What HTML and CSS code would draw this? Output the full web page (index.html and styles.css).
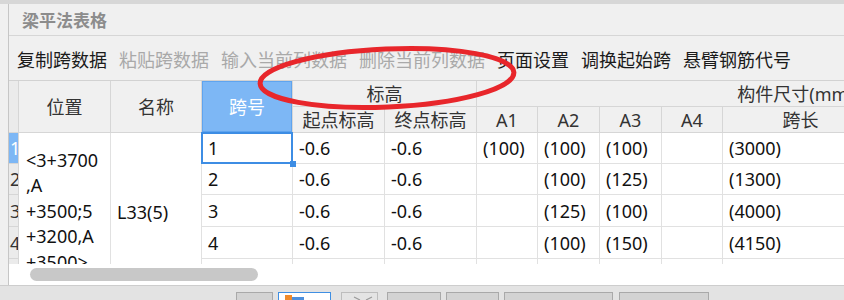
FILE: index.html
```html
<!DOCTYPE html>
<html lang="zh-CN">
<head>
<meta charset="utf-8">
<title>梁平法表格</title>
<link rel="stylesheet" href="styles.css">
</head>
<body>
<div class="topbar"></div>
<div class="frame">
  <div class="title">梁平法表格</div>
  <div class="toolbar">
    <span class="tb">复制跨数据</span>
    <span class="tb off">粘贴跨数据</span>
    <span class="tb off">输入当前列数据</span>
    <span class="tb off">删除当前列数据</span>
    <span class="tb">页面设置</span>
    <span class="tb">调换起始跨</span>
    <span class="tb">悬臂钢筋代号</span>
  </div>
  <div class="gridbox">
    <div class="viewport">
      <table class="grid">
        <colgroup>
          <col class="c-rh"><col class="c-pos"><col class="c-name"><col class="c-span">
          <col class="c-el"><col class="c-el"><col class="c-a1"><col class="c-a2">
          <col class="c-a2"><col class="c-a1"><col class="c-len"><col class="c-extra">
        </colgroup>
        <thead>
          <tr class="hr">
            <th class="rh" rowspan="2"></th>
            <th rowspan="2">位置</th>
            <th rowspan="2">名称</th>
            <th rowspan="2" class="hsel">跨号</th>
            <th colspan="2">标高</th>
            <th colspan="6">构件尺寸(mm)</th>
          </tr>
          <tr class="hr">
            <th>起点标高</th>
            <th>终点标高</th>
            <th>A1</th>
            <th>A2</th>
            <th>A3</th>
            <th>A4</th>
            <th>跨长</th>
            <th></th>
          </tr>
        </thead>
        <tbody>
          <tr class="r31">
            <td class="rh rsel">1</td>
            <td class="pos" rowspan="5">&lt;3+3700<br>,A<br>+3500;5<br>+3200,A<br>+3500&gt;</td>
            <td rowspan="5">L33(5)</td>
            <td class="cur">1</td>
            <td>-0.6</td><td>-0.6</td>
            <td>(100)</td><td>(100)</td><td>(100)</td><td></td>
            <td>(3000)</td><td></td>
          </tr>
          <tr class="r31">
            <td class="rh">2</td>
            <td>2</td>
            <td>-0.6</td><td>-0.6</td>
            <td></td><td>(100)</td><td>(125)</td><td></td>
            <td>(1300)</td><td></td>
          </tr>
          <tr class="r32">
            <td class="rh">3</td>
            <td>3</td>
            <td>-0.6</td><td>-0.6</td>
            <td></td><td>(125)</td><td>(100)</td><td></td>
            <td>(4000)</td><td></td>
          </tr>
          <tr class="r32">
            <td class="rh">4</td>
            <td>4</td>
            <td>-0.6</td><td>-0.6</td>
            <td></td><td>(100)</td><td>(150)</td><td></td>
            <td>(4150)</td><td></td>
          </tr>
          <tr class="r32">
            <td class="rh">5</td>
            <td>5</td>
            <td>-0.6</td><td>-0.6</td>
            <td></td><td>(100)</td><td>(100)</td><td></td>
            <td>(3000)</td><td></td>
          </tr>
        </tbody>
      </table>
    </div>
    <div class="hbar"><div class="thumb"></div></div>
  </div>
</div>
<div class="bottom">
  <div class="btn b1"></div>
  <div class="btn b2 on">
    <svg class="bicon" width="26" height="8" viewBox="0 0 26 8"><rect x="0" y="1" width="7" height="7" fill="#f08a2a"/><rect x="7" y="3" width="12" height="4" fill="#4d8fdc"/></svg>
  </div>
  <div class="btn b3 light">
    <svg class="bicon" width="30" height="8" viewBox="0 0 30 8"><polyline points="6,3 12,6" stroke="#9a9a9a" stroke-width="1.2" fill="none"/><polyline points="24,3 18,6" stroke="#9a9a9a" stroke-width="1.2" fill="none"/></svg>
  </div>
  <div class="btn b4"></div>
  <div class="btn b5"></div>
  <div class="btn b6"></div>
  <div class="btn b7"></div>
</div>
<svg class="mark" width="844" height="300" viewBox="0 0 844 300">
  <ellipse cx="387" cy="78" rx="127" ry="29" transform="rotate(-2.5 387 78)" fill="none" stroke="#e8262b" stroke-width="5"/>
</svg>
</body>
</html>
```
FILE: styles.css
```css
html, body {
  margin: 0;
  padding: 0;
}
body {
  width: 844px;
  height: 300px;
  overflow: hidden;
  position: relative;
  background: #f0f0f0;
  font-family: "Noto Sans", "Noto Sans CJK SC", sans-serif;
  font-size: 18px;
  color: #111;
}
.topbar {
  height: 4px;
  background: #d7d7d7;
}
.frame {
  margin-left: 8px;
  border-left: 1px solid #c6c6c6;
  height: 281px;
  display: flex;
  flex-direction: column;
}
.title {
  height: 31px;
  border-bottom: 1px solid #d6d6d6;
  padding-left: 13px;
  line-height: 31px;
  color: #8c8c8c;
  font-weight: bold;
  font-size: 17px;
  font-family: "Noto Sans CJK SC", sans-serif;
}
.toolbar {
  height: 44px;
  display: flex;
  align-items: center;
  gap: 12px;
  padding-left: 8px;
  font-family: "Noto Sans CJK SC", sans-serif;
  white-space: nowrap;
  overflow: hidden;
}
.tb {
  color: #1b1b1b;
  line-height: 24px;
  padding-top: 1px;
}
.tb.off {
  color: #a9a9a9;
}
.gridbox {
  background: #fff;
  height: 205px;
  display: flex;
  flex-direction: column;
}
.viewport {
  height: 184px;
  overflow: hidden;
}
.grid {
  border-collapse: separate;
  border-spacing: 0;
  table-layout: fixed;
  width: 1106px;
  border-top: 1px solid #d2d2d2;
}
.c-rh { width: 10px; }
.c-pos { width: 92px; }
.c-name { width: 91px; }
.c-span { width: 91px; }
.c-el { width: 92px; }
.c-a1 { width: 61px; }
.c-a2 { width: 62px; }
.c-len { width: 156px; }
.c-extra { width: 236px; }
.grid th, .grid td {
  padding: 0 0 0 6px;
  border-right: 1px solid #e1e1e1;
  border-bottom: 1px solid #e1e1e1;
  white-space: nowrap;
  overflow: hidden;
  text-align: left;
  vertical-align: middle;
  line-height: 24px;
}
.grid th {
  background: #f0f0f0;
  font-weight: normal;
  color: #333;
  text-align: center;
  padding: 0;
  border-right-color: #d6d6d6;
  border-bottom-color: #d6d6d6;
}
.hr { height: 26px; }
.r31 { height: 31px; }
.r32 { height: 32px; }
.grid .rh {
  background: #ebebeb;
  padding: 0 0 0 1px;
  color: #333;
  border-right-color: #d6d6d6;
  border-bottom-color: #d6d6d6;
  text-overflow: clip;
}
.grid th.hsel {
  background: #7db7f5;
  color: #fff;
  box-shadow: inset 0 0 0 1px #5fa4ef;
}
.grid td.rsel {
  background: #7db7f5;
  color: #fff;
}
.grid td.pos {
  white-space: normal;
  line-height: 25.5px;
  padding-left: 7px;
}
.grid td.cur {
  position: relative;
  overflow: visible;
}
.grid td.cur::after {
  content: "";
  position: absolute;
  left: -1px;
  top: -1px;
  right: -1px;
  bottom: -1px;
  border: 2px solid #3d8de4;
}
.grid td.cur::before {
  content: "";
  position: absolute;
  right: -4px;
  bottom: -4px;
  width: 6px;
  height: 6px;
  background: #3d8de4;
  z-index: 2;
}
.hbar {
  height: 21px;
  background: #fff;
  padding-top: 4px;
  box-sizing: border-box;
}
.thumb {
  margin-left: 21px;
  width: 228px;
  height: 13px;
  border-radius: 7px;
  background: #c8c8c8;
}
.bottom {
  height: 15px;
  border-top: 1px solid #cdcdcd;
  background: #e3e3e3;
  display: flex;
  padding-left: 236px;
  padding-top: 6px;
  box-sizing: border-box;
}
.btn {
  height: 20px;
  box-sizing: border-box;
  border: 1.5px solid #a9a9a9;
  background: #d3d3d3;
  flex: none;
}
.btn.on {
  background: #fff;
  border-color: #3f8fe3;
}
.btn.light {
  background: #e4e4e4;
  border-color: #bdbdbd;
}
.bicon {
  display: block;
  margin: 1px 0 0 6px;
}
.b1 { width: 37px; }
.b2 { width: 53px; margin-left: 5px; }
.b3 { width: 37px; margin-left: 10px; }
.b4 { width: 54px; margin-left: 9px; }
.b5 { width: 53px; margin-left: 5px; }
.b6 { width: 109px; margin-left: 5px; }
.b7 { width: 90px; margin-left: 6px; }
.mark {
  position: absolute;
  left: 0;
  top: 0;
  pointer-events: none;
}
```
